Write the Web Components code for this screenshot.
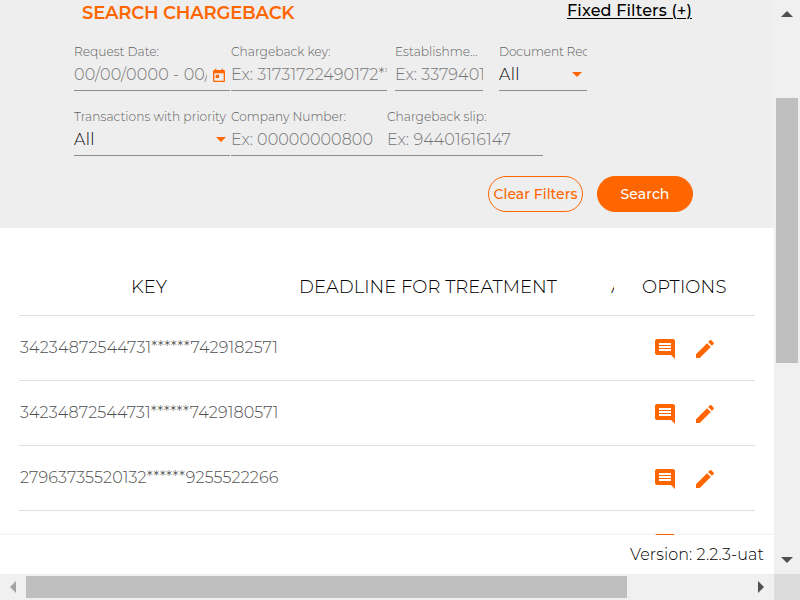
<!DOCTYPE html>
<html lang="en">
<head>
<meta charset="utf-8">
<title>Search Chargeback</title>
<style>
html,body{margin:0;width:800px;height:600px;overflow:hidden;background:#fff}
body{font-family:Montserrat,Inter,"Open Sans",sans-serif;color:#000}
</style>
</head>
<body>
<chargeback-app></chargeback-app>
<script>
function define(name, html, setup) {
  const t = document.createElement('template');
  t.innerHTML = html;
  customElements.define(name, class extends HTMLElement {
    connectedCallback() {
      if (this.shadowRoot) return;
      this.attachShadow({mode: 'open'}).append(t.content.cloneNode(true));
      if (setup) setup(this, this.shadowRoot);
    }
  });
}

// A single text run whose tracking is set so that it spans the "w" attribute, in pixels.
define('fit-text', `<style>
:host{display:block;white-space:nowrap}
span{display:inline-block;white-space:pre}
:host([underline]) span{text-decoration:underline;text-underline-offset:2px;text-decoration-thickness:1px}
</style><span></span>`, (host, root) => {
  const s = root.querySelector('span');
  s.textContent = host.getAttribute('text');
  const w = +host.getAttribute('w');
  host.style.width = w + 'px';
  const natural = s.getBoundingClientRect().width;
  if (natural) s.style.letterSpacing = (w - natural) / s.textContent.length + 'px';
});

define('app-icon', `<style>:host{display:block;color:#f60}svg{display:block;fill:currentColor}</style><svg></svg>`, (host, root) => {
  const icons = {
    comment: ['0 0 24 24', 24, 24, 'M21.99 4c0-1.1-.89-2-1.99-2H4c-1.1 0-2 .9-2 2v12c0 1.1.9 2 2 2h14l4 4-.01-18zM18 14H6v-2h12v2zm0-3H6V9h12v2zm0-3H6V6h12v2z'],
    edit: ['0 0 24 24', 24, 24, 'M3 17.25V21h3.75L17.81 9.94l-3.75-3.75L3 17.25zM20.71 7.04c.39-.39.39-1.02 0-1.41l-2.34-2.34c-.39-.39-1.02-.39-1.41 0l-1.83 1.83 3.75 3.75 1.83-1.83z'],
    today: ['0 0 24 24', 16, 16, 'M19 3h-1V1h-2v2H8V1H6v2H5c-1.11 0-1.99.9-1.99 2L3 19c0 1.1.89 2 2 2h14c1.1 0 2-.9 2-2V5c0-1.1-.9-2-2-2zm0 16H5V8h14v11zM7 10h5v5H7z'],
    drop: ['0 0 10 5', 10, 5, 'M0 0h10L5 5z'],
    up: ['0 0 12 6', 12, 6, 'M0 6h12L6 0z'],
    down: ['0 0 12 6', 12, 6, 'M0 0h12L6 6z'],
    left: ['0 0 6 12', 6, 12, 'M6 0v12L0 6z'],
    right: ['0 0 6 12', 6, 12, 'M0 0v12l6-6z']
  };
  const [box, w, h, d] = icons[host.getAttribute('name')];
  const svg = root.querySelector('svg');
  svg.setAttribute('viewBox', box);
  svg.setAttribute('width', w);
  svg.setAttribute('height', h);
  svg.innerHTML = '<path d="' + d + '"/>';
});

define('filter-field', `<style>
:host{display:block;box-sizing:border-box;height:49px;border-bottom:1px solid #8c8c8c}
.label{height:20px;line-height:20px;font-size:12.2px;font-weight:300;color:#606060;overflow:hidden}
.row{display:flex;height:28px}
.value{flex:1;min-width:0;overflow:hidden;line-height:26px;font-size:16px;font-weight:300;color:#757575}
:host([filled]) .value{color:#000}
</style>
<div class="label"><slot name="label"></slot></div>
<div class="row"><div class="value"><slot></slot></div><slot name="icon"></slot></div>`);

define('pill-button', `<style>
:host{display:flex;box-sizing:border-box;height:36px;border:1px solid #f60;border-radius:18px;align-items:center;justify-content:center;font-size:14px;font-weight:500;color:#f60}
:host([primary]){background:#f60;color:#fff}
</style><slot></slot>`);

define('filter-panel', `<style>
:host{display:block;height:228px;background:#eee;overflow:hidden}
header{display:flex;justify-content:space-between;height:42px;padding:0 82px}
.title{font-size:18px;font-weight:600;color:#f60;line-height:26px}
.fixed{font-size:16px;font-weight:550;line-height:21px}
.fields{display:flex;margin-left:74px;height:65px}
.w{width:156px}.n{width:88px}
.g1{margin-left:1px}.g8{margin-left:8px}.g16{margin-left:16px}
.date{margin:6px 3px 0 4px}
.sel{margin:10px 5px 0 0}
.sel2{margin:10px 4px 0 0}
.actions{display:flex;justify-content:flex-end;gap:14px;padding:4px 81px 0 0}
.clear{width:95px}.search{width:96px}
</style>
<header>
<fit-text class="title" w="212.3" text="SEARCH CHARGEBACK"></fit-text>
<fit-text class="fixed" underline w="125" text="Fixed Filters (+)"></fit-text>
</header>
<div class="fields">
<filter-field class="w"><fit-text slot="label" w="85" text="Request Date:"></fit-text><fit-text w="136" text="00/00/0000 - 00/"></fit-text><app-icon slot="icon" class="date" name="today"></app-icon></filter-field>
<filter-field class="w g1"><fit-text slot="label" w="99.5" text="Chargeback key:"></fit-text><fit-text w="160" text="Ex: 31731722490172**"></fit-text></filter-field>
<filter-field class="n g8"><fit-text slot="label" w="82.5" text="Establishme..."></fit-text><fit-text w="90" text="Ex: 3379401"></fit-text></filter-field>
<filter-field class="n g16" filled><fit-text slot="label" w="90" text="Document Rec"></fit-text><fit-text w="21" text="All"></fit-text><app-icon slot="icon" class="sel" name="drop"></app-icon></filter-field>
</div>
<div class="fields">
<filter-field class="w" filled><fit-text slot="label" w="152" text="Transactions with priority"></fit-text><fit-text w="21" text="All"></fit-text><app-icon slot="icon" class="sel2" name="drop"></app-icon></filter-field>
<filter-field class="w g1"><fit-text slot="label" w="115" text="Company Number:"></fit-text><fit-text w="142" text="Ex: 00000000800"></fit-text></filter-field>
<filter-field class="w"><fit-text slot="label" w="99.5" text="Chargeback slip:"></fit-text><fit-text w="124" text="Ex: 94401616147"></fit-text></filter-field>
</div>
<div class="actions">
<pill-button class="clear"><fit-text w="84" text="Clear Filters"></fit-text></pill-button>
<pill-button class="search" primary><fit-text w="49" text="Search"></fit-text></pill-button>
</div>`);

define('table-row', `<style>
:host{display:flex;box-sizing:border-box;height:65px;border-bottom:1px solid #dfdfdf;align-items:center;justify-content:space-between;padding:1px 38px 0 1px}
.key{font-size:16px;font-weight:300;color:#505050;padding-bottom:2px}
.opts{display:flex;gap:16px}
</style>
<div class="key"><slot></slot></div>
<div class="opts"><app-icon name="comment"></app-icon><app-icon name="edit"></app-icon></div>`);

define('chargeback-table', `<style>
:host{display:block;padding:30px 19px 0;overflow:hidden}
.head{display:flex;box-sizing:border-box;height:58px;border-bottom:1px solid #dfdfdf;font-size:18px;font-weight:300;color:#000;line-height:58px}
.key{margin-left:112px}.deadline{margin-left:132px}
.cut{width:3px;overflow:hidden;margin-left:54px}
.options{margin-left:28px}
</style>
<div class="head">
<fit-text class="key" w="36" text="KEY"></fit-text>
<fit-text class="deadline" w="258" text="DEADLINE FOR TREATMENT"></fit-text>
<div class="cut"><fit-text w="13" text="A"></fit-text></div>
<fit-text class="options" w="84.5" text="OPTIONS"></fit-text>
</div>
<table-row><fit-text w="258" text="34234872544731******7429182571"></fit-text></table-row>
<table-row><fit-text w="258.5" text="34234872544731******7429180571"></fit-text></table-row>
<table-row><fit-text w="258.5" text="27963735520132******9255522266"></fit-text></table-row>
<table-row></table-row>`);

define('page-footer', `<style>
:host{display:flex;height:39px;background:#fff;box-shadow:0 0 3px rgba(0,0,0,.13);justify-content:flex-end;padding-right:10px;line-height:40px;font-size:16px;font-weight:350;position:relative}
</style><fit-text w="134" text="Version: 2.2.3-uat"></fit-text>`);

define('scroll-bar', `<style>
:host{display:flex;background:#f0f0f0;box-sizing:border-box}
:host([axis=y]){flex-direction:column;align-items:center;padding:11px 0}
:host([axis=x]){align-items:center;padding:0 10px}
.thumb{background:#bfbfbf}
:host([axis=y]) .thumb{width:22px;height:265px;margin-top:81px}
:host([axis=x]) .thumb{height:22px;width:601px;margin-left:10px}
.end{margin:auto 0 0 0;color:#505050}
:host([axis=x]) .end{margin:0 0 0 auto}
.start{color:#505050}
:host([axis=x]) .start{color:#a3a3a3}
</style>
<div class="thumb"></div>`, (host, root) => {
  const names = host.getAttribute('axis') === 'y' ? ['up', 'down'] : ['left', 'right'];
  const [start, end] = names.map((name, i) => {
    const icon = document.createElement('app-icon');
    icon.className = i ? 'end' : 'start';
    icon.setAttribute('name', name);
    return icon;
  });
  const thumb = root.querySelector('.thumb');
  thumb.before(start);
  thumb.after(end);
});

define('chargeback-app', `<style>
:host{display:grid;width:800px;height:600px;grid-template:574px 26px / 774px 26px}
.view{display:grid;grid-template-rows:228px 307px 39px;overflow:hidden}
.corner{background:#dcdcdc}
</style>
<div class="view"><filter-panel></filter-panel><chargeback-table></chargeback-table><page-footer></page-footer></div>
<scroll-bar axis="y"></scroll-bar>
<scroll-bar axis="x"></scroll-bar>
<div class="corner"></div>`);
</script>
</body>
</html>
